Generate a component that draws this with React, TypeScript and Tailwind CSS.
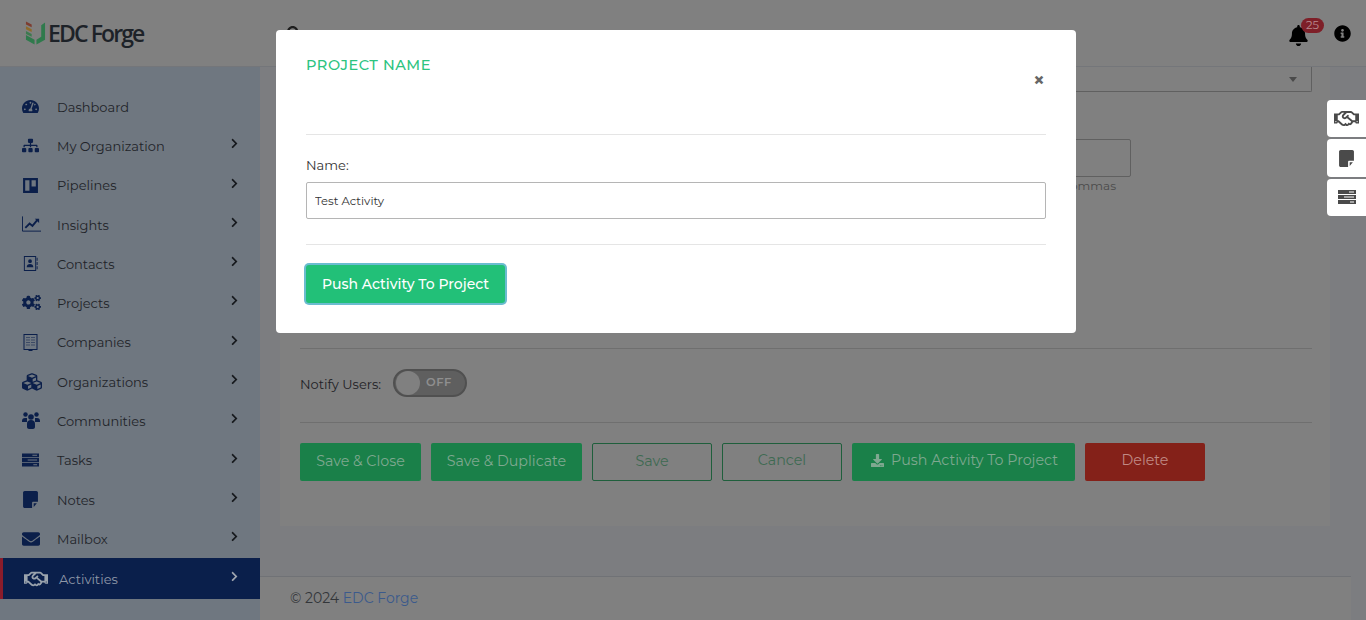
import {
  FaBell,
  FaChevronRight,
  FaCogs,
  FaCubes,
  FaDownload,
  FaEnvelope,
  FaInfoCircle,
  FaRegHandshake,
  FaSearch,
  FaSitemap,
  FaTachometerAlt,
} from 'react-icons/fa'

const font = 'font-["Montserrat","Inter","Liberation_Sans",sans-serif]'

const PipelinesIcon = ({ className }: { className?: string }) => (
  <svg viewBox="0 0 16 16" className={className} fill="currentColor">
    <path fillRule="evenodd" d="M1 1h14v14H1zM3 3v10h4V3zM9 3v6h4V3z" />
  </svg>
)

const InsightsIcon = ({ className }: { className?: string }) => (
  <svg viewBox="0 0 20 16" className={className} fill="none" stroke="currentColor">
    <path d="M.5 0v15.500H20" strokeWidth="1" />
    <path d="M3.500 12L8 7.500l3 2.500 5-6" strokeWidth="2" />
    <path d="M13.500 2.500H18V7z" fill="currentColor" strokeWidth="0" />
  </svg>
)

const ContactsIcon = ({ className }: { className?: string }) => (
  <svg viewBox="0 0 16 18" className={className} fill="currentColor">
    <path fillRule="evenodd" d="M1 1h13v16H1zM2 2v14h11V2zM7.500 4.500a2 2 0 1 1 0 4 2 2 0 0 1 0-4zM4 13c0-2.500 1.500-3.500 3.500-3.500S11 10.500 11 13z" />
    <path d="M14.500 3h1v3h-1zM14.500 7.500h1v3h-1zM14.500 12h1v3h-1z" />
  </svg>
)

const UsersIcon = ({ className }: { className?: string }) => (
  <svg viewBox="0 0 18 17" className={className} fill="currentColor">
    <circle cx="3.500" cy="2.500" r="2.200" />
    <circle cx="14.500" cy="2.500" r="2.200" />
    <circle cx="9" cy="5" r="2.800" />
    <path d="M0 9c0-2 1-3 3-3h2v4H0zM18 9c0-2-1-3-3-3h-2v4h5zM5 12c0-3 1.500-4 4-4s4 1 4 4v3c0 1-1 2-2 2H7c-1 0-2-1-2-2z" />
  </svg>
)

const TasksIcon = ({ className }: { className?: string }) => (
  <svg viewBox="0 0 18 14" className={className} fill="currentColor">
    <path fillRule="evenodd" d="M0 0h18v4H0zM11 1.500v1h5v-1zM0 5h18v4H0zM6 6.500v1h10v-1zM0 10h18v4H0zM12 11.500v1h4v-1z" />
  </svg>
)

const NoteIcon = ({ className }: { className?: string }) => (
  <svg viewBox="0 0 16 16" className={className} fill="currentColor">
    <path d="M1 1.500C1 .7 1.700 0 2.500 0h11c.8 0 1.500.7 1.500 1.500V10h-4.500c-.5 0-1 .5-1 1v5h-7C1.700 16 1 15.300 1 14.500z" />
    <path d="M11 11.500h3L11 15z" />
  </svg>
)

const CompanyIcon = ({ className }: { className?: string }) => (
  <svg viewBox="0 0 14 17" className={className} fill="currentColor">
    <path fillRule="evenodd" d="M0 0h14v16H9v1H5v-1H0zM1 1v14h12V1z" />
    <path d="M3 3h1v1H3zM5 3h1v1H5zM8 3h1v1H8zM10 3h1v1h-1zM3 5.500h1v1H3zM5 5.500h1v1H5zM8 5.500h1v1H8zM10 5.500h1v1h-1zM3 8h1v1H3zM5 8h1v1H5zM8 8h1v1H8zM10 8h1v1h-1zM3 10.500h1v1H3zM5 10.500h1v1H5zM8 10.500h1v1H8zM10 10.500h1v1h-1z" />
  </svg>
)

const navItems = [
  { label: 'Dashboard', icon: <FaTachometerAlt className="w-[17px] h-[17px]" />, arrow: false },
  { label: 'My Organization', icon: <FaSitemap className="w-[17px] h-[17px]" />, arrow: true },
  { label: 'Pipelines', icon: <PipelinesIcon className="w-[17px] h-[17px]" />, arrow: true },
  { label: 'Insights', icon: <InsightsIcon className="w-[19px] h-[16px]" />, arrow: true },
  { label: 'Contacts', icon: <ContactsIcon className="w-[17px] h-[17px]" />, arrow: true },
  { label: 'Projects', icon: <FaCogs className="w-[19px] h-[19px]" />, arrow: true },
  { label: 'Companies', icon: <CompanyIcon className="w-[17px] h-[17px]" />, arrow: true },
  { label: 'Organizations', icon: <FaCubes className="w-[20px] h-[20px]" />, arrow: true },
  { label: 'Communities', icon: <UsersIcon className="w-[18px] h-[17px]" />, arrow: true },
  { label: 'Tasks', icon: <TasksIcon className="w-[17px] h-[14px]" />, arrow: true },
  { label: 'Notes', icon: <NoteIcon className="w-[17px] h-[17px]" />, arrow: true },
  { label: 'Mailbox', icon: <FaEnvelope className="w-[18px] h-[18px]" />, arrow: true },
]

const App = () => {
  return (
    <div className={`relative w-[1366px] h-[620px] overflow-hidden bg-[#808080] text-[#262a2e] ${font}`}>
      {/* Header */}
      <header className="h-[67px] bg-[#808080] border-b border-[#74767a] flex items-center justify-between pl-[25px] pr-[15px]">
        <div className="flex items-center gap-[2px]">
          <svg viewBox="0 0 22 26" className="w-[21px] h-[26px]">
            <path d="M1 1l6 3v3L1 4z" fill="#7d3d30" />
            <path d="M1 6l6 3v3L1 9z" fill="#8d6a2a" />
            <path d="M1 11l6 3v3L1 14z" fill="#3d7a50" />
            <path d="M1 15l9 5v5l-9-5zM21 2v18l-9 5v-5l5-3V5z" fill="#2f7a4c" />
          </svg>
          <span className="font-['Open_Sans'] text-[23px] tracking-[-1.9px] font-semibold text-[#1d2228]">EDC Forge</span>
        </div>
        <div className="flex items-center gap-[26px]">
          <div className="relative">
            <FaBell className="w-[19px] h-[21px] text-black mt-[4px]" />
            <span className="absolute -top-[3px] left-[12px] w-[23px] h-[15px] rounded-full bg-[#7e1f28] text-[#b98a8d] text-[11.500px] leading-[15px] text-center">25</span>
          </div>
          <FaInfoCircle className="w-[17px] h-[17px] text-black" />
        </div>
      </header>

      <div className="flex h-[553px]">
        {/* Sidebar */}
        <aside className="w-[260px] shrink-0 bg-[#6f7780] pt-[19.800px]">
          {navItems.map((item) => (
            <div key={item.label} className="h-[39.300px] pl-[22px] pr-[21px] flex items-center text-[#1f2429]">
              <span className="w-[35px] shrink-0 flex items-center text-[#0b1f4a]">{item.icon}</span>
              <span className="flex-1 text-[13px] pt-[2px]">{item.label}</span>
              {item.arrow && <FaChevronRight className="w-[9px] h-[11px] mb-[4px] text-[#16191d]" />}
            </div>
          ))}
          <div className="h-[41px] pl-[21px] pr-[21px] flex items-center bg-[#0a1f4b] border-l-[3px] border-[#8a1c2b] text-[#8f98a8]">
            <span className="w-[35px] shrink-0 text-[#9aa3ad]">
              <FaRegHandshake className="w-[24px] h-[24px]" />
            </span>
            <span className="flex-1 text-[13px] pt-[2px]">Activities</span>
            <FaChevronRight className="w-[9px] h-[11px] mb-[4px] text-[#a0a6b0]" />
          </div>
        </aside>

        {/* Main */}
        <main className="flex-1 flex flex-col bg-[#7c7d80] pr-[15px]">
          <div className="flex-1 px-[20px]">
            <div className="h-[459px] w-[1050px] bg-[#808080] pl-[20px] pr-[18px]">
              <div className="h-[25px] border border-t-0 border-[#606060] rounded-b-[2px] flex items-center justify-end pr-[14px]">
                <span className="border-x-[4px] border-t-[5px] border-x-transparent border-t-[#4a4a4a]" />
              </div>
              <div className="flex justify-end h-[38px] mt-[47px] pr-[181px]">
                <div className="w-[400px] border border-[#606060] rounded-[2px]" />
              </div>
              <p className="text-right pr-[196px] text-[12px] leading-[16px] mt-[1px] text-[#4b4b4b]">Separate with commas</p>
              <hr className="mt-[154px] border-[#6f6f6f]" />
              <div className="flex items-center h-[73px] pb-[6px]">
                <span className="text-[13px] text-[#1f2226] mr-[12px] pt-[4px]">Notify Users:</span>
                <div className="w-[74px] h-[28px] rounded-full bg-[#5f5f5f] border-[2px] border-[#505050] flex items-center pl-[1px] gap-[6px]">
                  <span className="w-[24px] h-[24px] rounded-full bg-[#808080]" />
                  <span className="text-[11.500px] font-semibold tracking-[0.500px] text-[#8f8f8f]">OFF</span>
                </div>
              </div>
              <hr className="border-[#6f6f6f]" />
              <div className="flex gap-[10px] mt-[20px] text-[14.250px]">
                <button className="h-[38px] w-[121px] rounded-[2px] bg-[#1a8049] text-[#7fa890]">Save &amp; Close</button>
                <button className="h-[38px] w-[151px] rounded-[2px] bg-[#1a8049] text-[#7fa890]">Save &amp; Duplicate</button>
                <button className="h-[38px] w-[120px] rounded-[2px] border border-[#1f5f3c] text-[#3e6a52]">Save</button>
                <button className="h-[38px] w-[120px] rounded-[2px] border border-[#1f5f3c] text-[#3e6a52] pb-[2px]">Cancel</button>
                <button className="h-[38px] w-[223px] rounded-[2px] bg-[#1a8049] text-[#7fa890] flex items-center justify-center gap-[7px] pb-[2px] pl-[2px]">
                  <FaDownload className="w-[13px] h-[13px] mb-[2px]" />
                  Push Activity To Project
                </button>
                <button className="h-[38px] w-[120px] rounded-[2px] bg-[#842119] text-[#c08a85] pb-[2px]">Delete</button>
              </div>
            </div>
          </div>
          <footer className="h-[44px] border-t border-[#707276] bg-[#808080] pl-[30px] flex items-center text-[14px] text-[#33363a]">
            © 2024&nbsp;<span className="text-[#3b5a8c]">EDC Forge</span>
          </footer>
        </main>
      </div>

      {/* Search icon cut off behind the modal */}
      <FaSearch className="absolute left-[287px] top-[26px] w-[14px] h-[14px] text-[#1d1d1d]" />

      {/* Floating side buttons */}
      <div className="absolute right-0 top-[100px] w-[39px] flex flex-col gap-[2px]">
        <div className="h-[37px] bg-white rounded-l-[4px] flex items-center justify-center">
          <FaRegHandshake className="w-[25px] h-[25px] text-[#4a4a4a]" />
        </div>
        <div className="h-[38px] bg-white rounded-l-[4px] flex items-center justify-center">
          <NoteIcon className="w-[17px] h-[17px] text-[#4a4a4a]" />
        </div>
        <div className="h-[37px] bg-white rounded-l-[4px] flex items-center justify-center pb-[2px]">
          <TasksIcon className="w-[18px] h-[14px] text-[#4a4a4a]" />
        </div>
      </div>

      {/* Modal */}
      <div className="absolute left-[276px] top-[30px] w-[800px] h-[303px] bg-white rounded-[4px] px-[30px] text-[#333]">
        <div className="h-[105px] border-b border-[#e5e5e5] relative">
          <h2 className="pt-[26px] text-[14.500px] leading-[18px] tracking-[0.550px] font-medium text-[#2cc47f]">PROJECT NAME</h2>
          <span className="absolute right-[1px] top-[40px] text-[20px] leading-[20px] font-bold text-[#666]">×</span>
        </div>
        <label className="block mt-[21px] text-[13px] leading-[18px] text-[#333]">Name:</label>
        <input
          readOnly
          value="Test Activity"
          className="mt-[8px] block w-[740px] h-[37px] border border-[#b5b5b5] rounded-[2px] px-[8px] text-[11.600px] text-[#333] outline-none"
        />
        <hr className="mt-[25px] border-[#e5e5e5]" />
        <button className="mt-[20px] w-[199px] h-[38px] rounded-[3px] bg-[#22c078] text-white text-[14px] font-medium pt-[1px] shadow-[0_0_0_2px_#6bbcd0]">
          Push Activity To Project
        </button>
      </div>
    </div>
  )
}

export default App
